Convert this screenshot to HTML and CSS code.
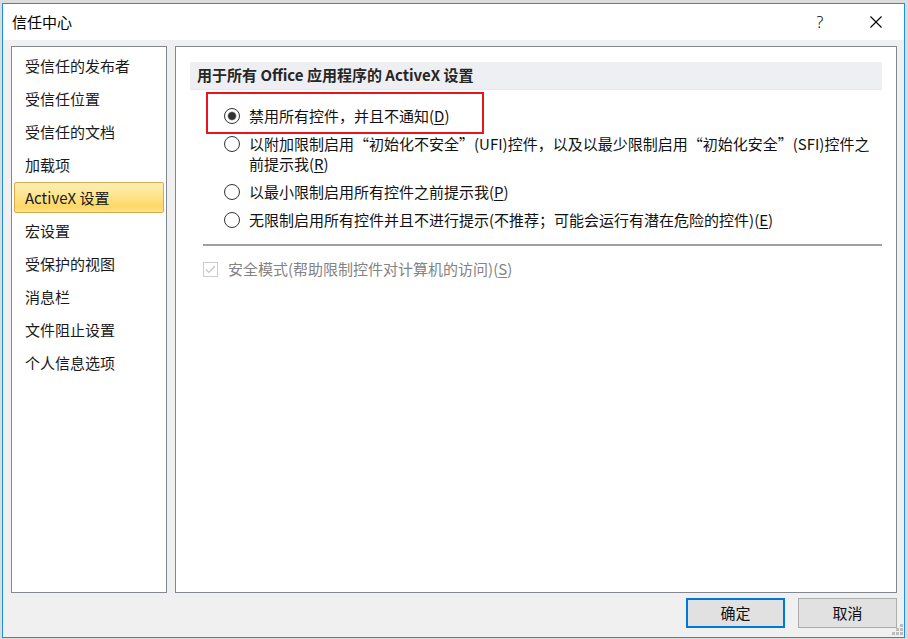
FILE: index.html
```html
<!DOCTYPE html>
<html lang="zh-CN">
<head>
<meta charset="utf-8">
<title>信任中心</title>
<link rel="stylesheet" href="styles.css">
</head>
<body>
<div class="window">
  <div class="titlebar">
    <span class="title">信任中心</span>
    <span class="help">?</span>
    <span class="close"><svg width="12" height="12" viewBox="0 0 12 12"><path d="M0.5 0.5 L11.5 11.5 M11.5 0.5 L0.5 11.5" stroke="#000" stroke-width="1.1" fill="none"/></svg></span>
  </div>
  <div class="content">
    <div class="panels">
      <ul class="nav">
        <li>受信任的发布者</li>
        <li>受信任位置</li>
        <li>受信任的文档</li>
        <li>加载项</li>
        <li class="active">ActiveX 设置</li>
        <li>宏设置</li>
        <li>受保护的视图</li>
        <li>消息栏</li>
        <li>文件阻止设置</li>
        <li>个人信息选项</li>
      </ul>
      <div class="main">
        <div class="section-header">用于所有 Office 应用程序的 ActiveX 设置</div>
        <div class="options">
          <label class="option"><span class="radio checked"></span><span class="label">禁用所有控件，并且不通知(<u>D</u>)</span></label>
          <label class="option"><span class="radio"></span><span class="label">以附加限制启用“初始化不安全”(UFI)控件，以及以最少限制启用“初始化安全”(SFI)控件之<br>前提示我(<u>R</u>)</span></label>
          <label class="option"><span class="radio"></span><span class="label">以最小限制启用所有控件之前提示我(<u>P</u>)</span></label>
          <label class="option"><span class="radio"></span><span class="label">无限制启用所有控件并且不进行提示(不推荐；可能会运行有潜在危险的控件)(<u>E</u>)</span></label>
        </div>
        <div class="separator"></div>
        <label class="check disabled"><span class="box"><svg width="13" height="13" viewBox="0 0 13 13"><path d="M2 6.5 L5 9.5 L11 3" stroke="#c4c4c4" stroke-width="1.2" fill="none"/></svg></span><span class="label">安全模式(帮助限制控件对计算机的访问)(<u>S</u>)</span></label>
        <div class="annotation"></div>
      </div>
    </div>
    <div class="footer">
      <button class="btn primary">确定</button>
      <button class="btn">取消</button>
    </div>
  </div>
  <svg class="grip" width="12" height="12" viewBox="0 0 12 12">
    <rect x="9" y="1" width="3" height="3" fill="#bdbdbd"/>
    <rect x="5" y="5" width="3" height="3" fill="#bdbdbd"/>
    <rect x="9" y="5" width="3" height="3" fill="#bdbdbd"/>
    <rect x="1" y="9" width="3" height="3" fill="#bdbdbd"/>
    <rect x="5" y="9" width="3" height="3" fill="#bdbdbd"/>
    <rect x="9" y="9" width="3" height="3" fill="#bdbdbd"/>
  </svg>
</div>
</body>
</html>
```

FILE: styles.css
```css
* { box-sizing: border-box; }

html, body {
  margin: 0;
  padding: 0;
}

body {
  background: #dcdcdc;
  font-family: "Noto Sans CJK SC", "Noto Sans", sans-serif;
  font-size: 15px;
  color: #111;
  width: 908px;
  height: 639px;
  overflow: hidden;
}

.window {
  position: relative;
  margin: 3px 0 0 2px;
  width: 903px;
  height: 635px;
  border: 1px solid #1a8fe3;
  background: #f0f0f0;
  display: flex;
  flex-direction: column;
}

.titlebar {
  height: 36px;
  background: #fff;
  display: flex;
  align-items: center;
  flex: none;
}

.title {
  flex: 1;
  padding-left: 9px;
  font-size: 15px;
  color: #000;
  line-height: 20px;
  padding-bottom: 1px;
}

.help {
  width: 30px;
  text-align: center;
  font-family: "Noto Sans", sans-serif;
  font-size: 16px;
  font-weight: 300;
  color: #000;
  margin-right: 18px;
}

.close {
  width: 46px;
  height: 36px;
  display: flex;
  align-items: center;
  justify-content: center;
  margin-right: 5px;
}

.content {
  flex: 1;
  padding: 6px 7px 0 8px;
  display: flex;
  flex-direction: column;
}

.panels {
  height: 547px;
  display: flex;
  gap: 8px;
}

.nav {
  list-style: none;
  margin: 0;
  padding: 3px 2px;
  width: 156px;
  height: 100%;
  background: #fff;
  border: 1px solid #828790;
  display: flex;
  flex-direction: column;
  gap: 2px;
}

.nav li {
  height: 31px;
  flex: none;
  line-height: 29px;
  padding-left: 10px;
  border: 1px solid transparent;
  border-radius: 2px;
  white-space: nowrap;
  color: #1a1a1a;
}

.nav li.active {
  border-color: #d9aa4e;
  background: linear-gradient(#fdeeb4 0%, #fde48e 45%, #fdd865 80%, #fee28a 100%);
}

.main {
  position: relative;
  flex: 1;
  height: 100%;
  background: #fff;
  border: 1px solid #828790;
}

.section-header {
  margin: 15px 14px 0 14px;
  height: 28px;
  line-height: 26px;
  padding-left: 7px;
  background: #eeeff3;
  border-bottom: 1px solid #e6e7eb;
  font-weight: bold;
  color: #262626;
}

.options {
  margin: 16px 0 0 49px;
  display: flex;
  flex-direction: column;
  gap: 8px;
}

.option {
  display: flex;
  align-items: flex-start;
  line-height: 20px;
}

.option .label {
  white-space: nowrap;
}

.radio {
  flex: none;
  width: 16px;
  height: 16px;
  margin: 2px 9px 0 -1px;
  border: 1px solid #333;
  border-radius: 50%;
  background: #fff;
}

.radio.checked {
  background: radial-gradient(circle, #333 0, #333 3.4px, #fff 4.8px);
}

u {
  text-decoration: underline;
  text-underline-offset: 2px;
}

.separator {
  margin: 14px 14px 0 27px;
  height: 2px;
  background: #a0a0a0;
}

.check {
  margin: 13px 0 0 27px;
  display: flex;
  align-items: flex-start;
  line-height: 20px;
}

.check .box {
  flex: none;
  width: 15px;
  height: 15px;
  margin: 3px 10px 0 0;
  border: 1px solid #cccccc;
  background: #fff;
  display: flex;
  align-items: center;
  justify-content: center;
}

.check.disabled .label {
  color: #838383;
}

.annotation {
  position: absolute;
  left: 30px;
  top: 45px;
  width: 278px;
  height: 42px;
  border: 2px solid #e8141e;
}

.footer {
  margin-top: 5px;
  display: flex;
  justify-content: flex-end;
  gap: 13px;
}

.btn {
  width: 99px;
  height: 30px;
  font-family: "Noto Sans CJK SC", "Noto Sans", sans-serif;
  font-size: 15px;
  color: #111;
  background: #e1e1e1;
  border: 1px solid #adadad;
  padding: 0;
  line-height: 26px;
}

.btn.primary {
  border: 2px solid #0078d7;
}

.grip {
  position: absolute;
  right: 1px;
  bottom: 2px;
}
```
